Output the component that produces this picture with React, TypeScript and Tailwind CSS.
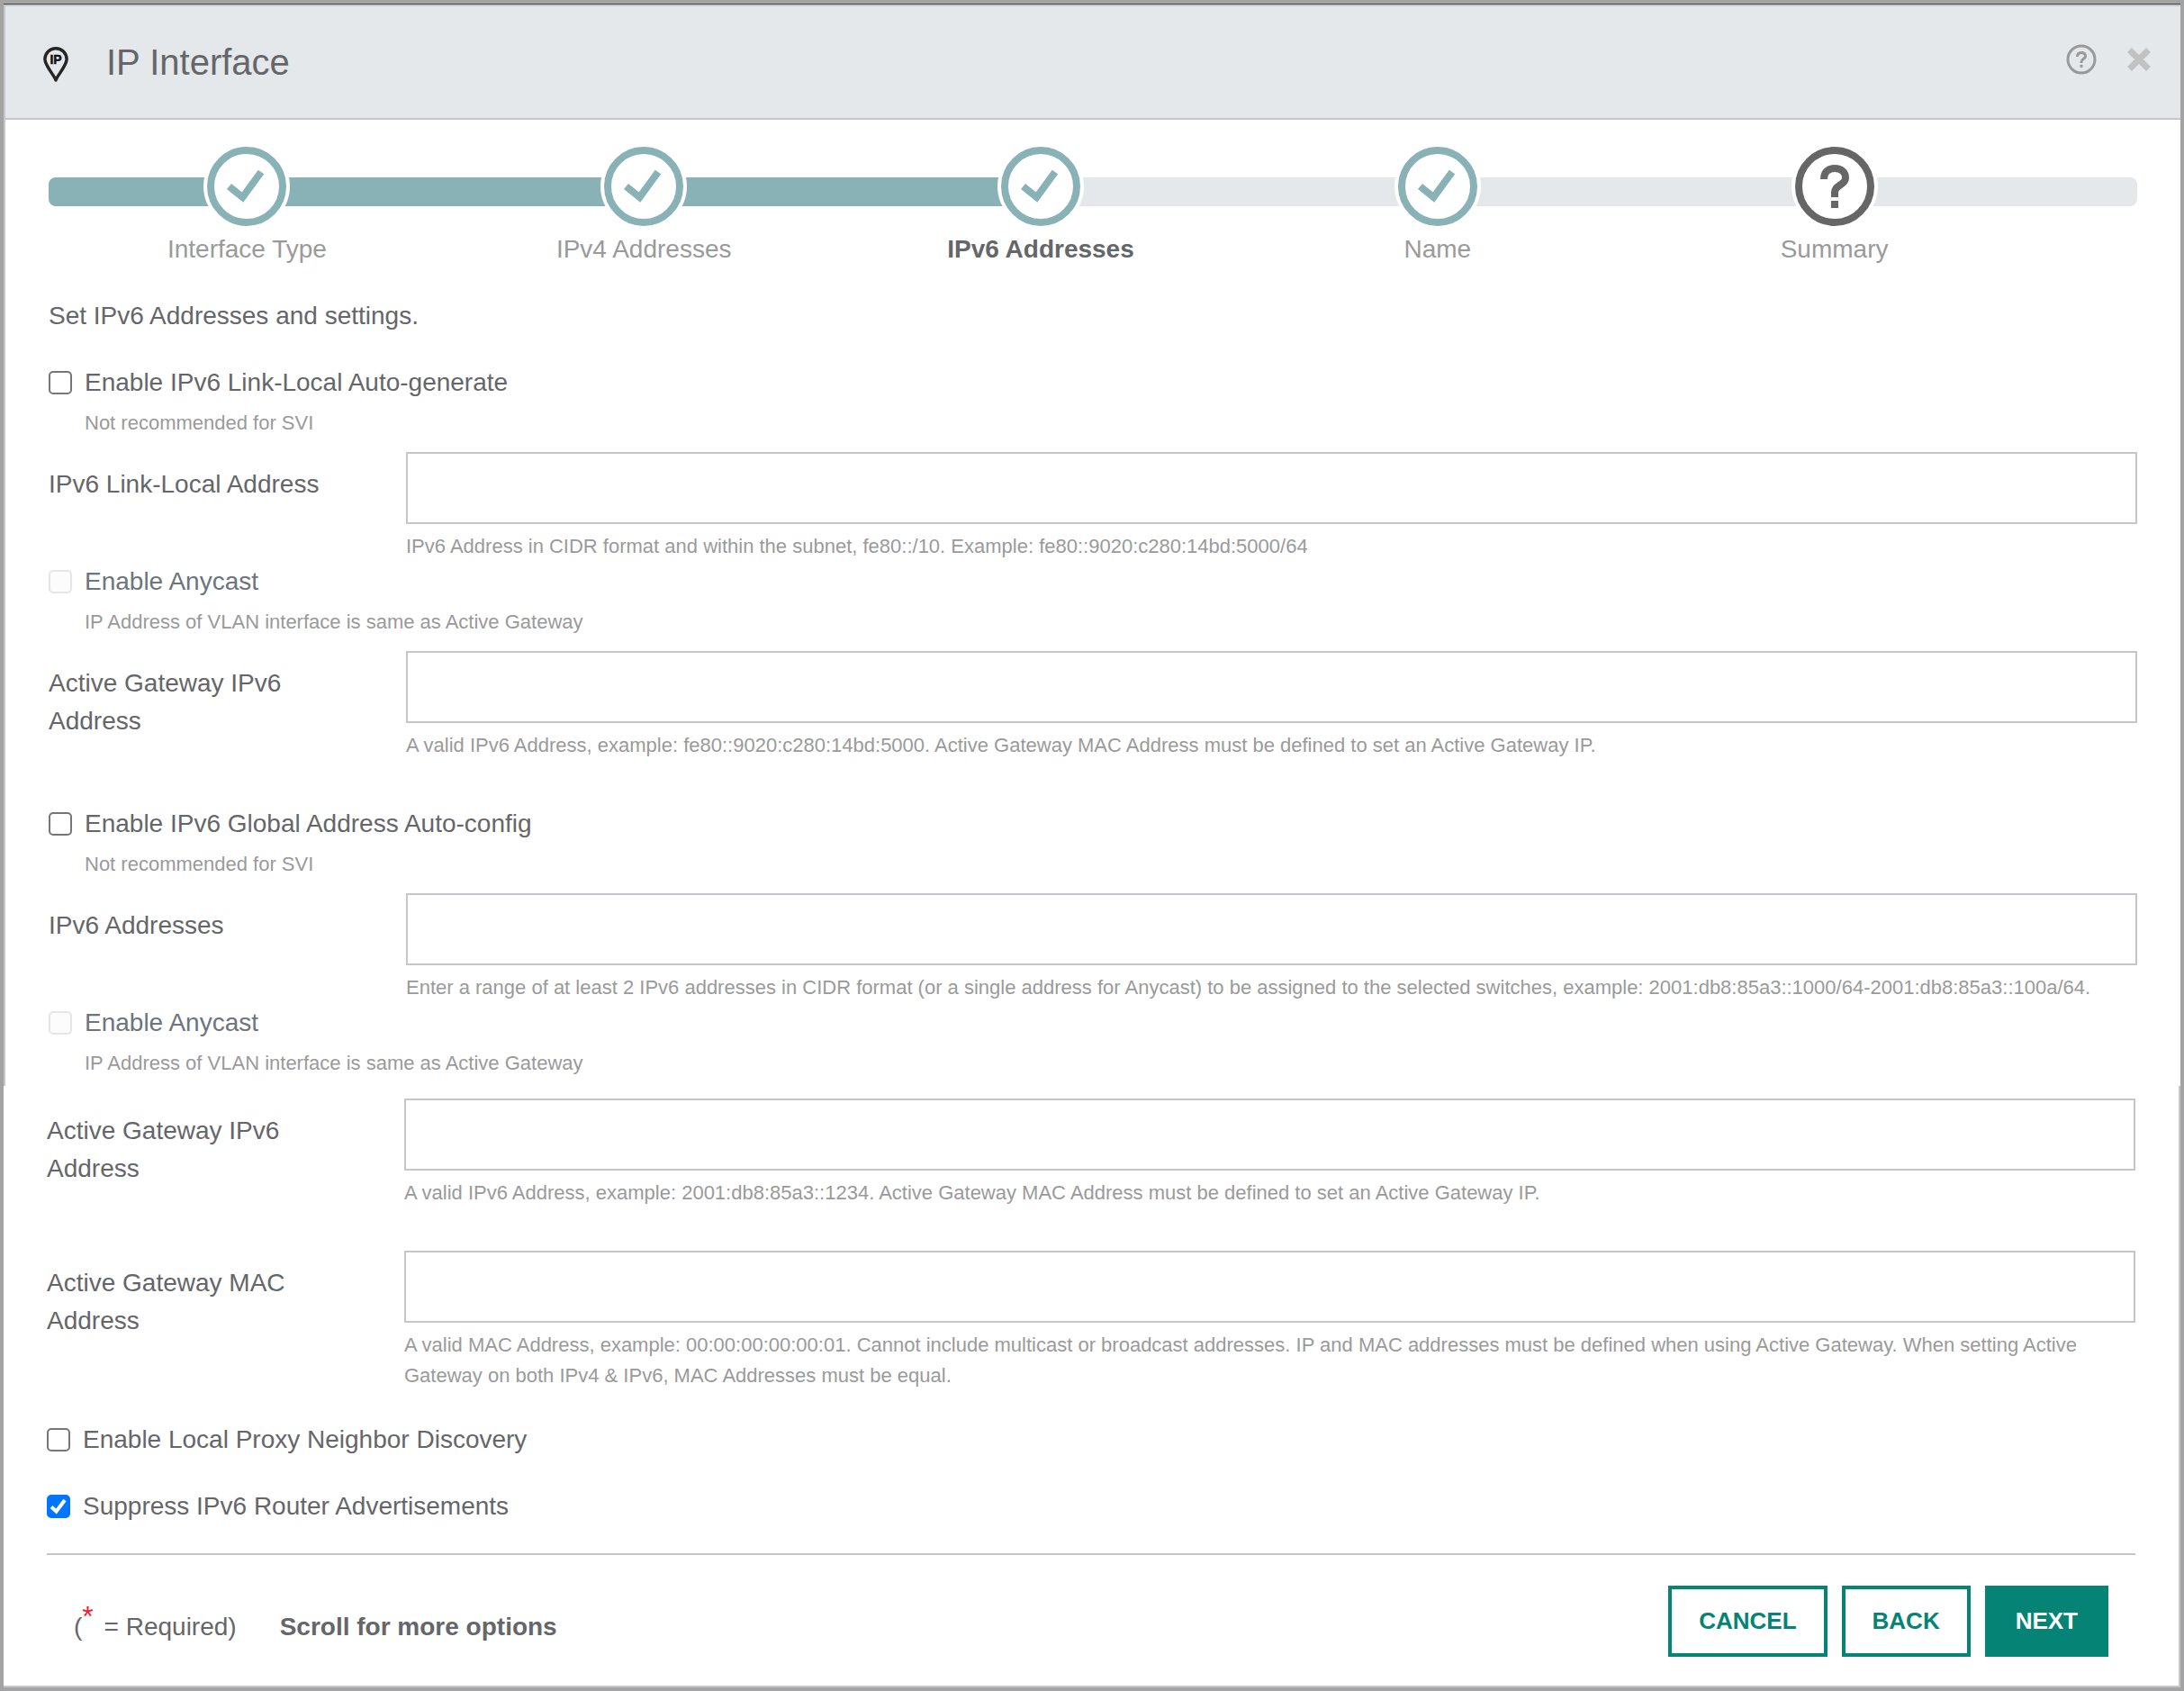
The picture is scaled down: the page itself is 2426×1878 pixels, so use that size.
import type { ReactNode } from "react";

const steps = [
  { label: "Interface Type", done: true },
  { label: "IPv4 Addresses", done: true },
  { label: "IPv6 Addresses", done: true, current: true },
  { label: "Name", done: true },
  { label: "Summary", done: false },
];

function PinIcon() {
  return (
    <svg className="h-12 w-8" viewBox="0 0 32 48" fill="none" aria-hidden="true">
      <path
        d="M16 44C14.500 39 3.900 28 3.900 20.800A12.100 12.100 0 0 1 28.100 20.800C28.100 28 17.500 39 16 44Z"
        stroke="#262626"
        strokeWidth="3.500"
        strokeLinejoin="round"
      />
      <text x="16" y="26" textAnchor="middle" fontSize="14" fontWeight="700" fill="#111111" stroke="#111111" strokeWidth="0.500">
        IP
      </text>
    </svg>
  );
}

function StepIcon({ done }: { done: boolean }) {
  return (
    <svg className="h-24 w-24" viewBox="0 0 96 96" fill="none" aria-hidden="true">
      <circle cx="48" cy="48" r="48" fill="#ffffff" />
      <circle cx="48" cy="48" r="40" stroke={done ? "#88b2b6" : "#666666"} strokeWidth="8" />
      {done ? (
        <path d="M28.500 48L43.500 60L64 32" stroke="#88b2b6" strokeWidth="8" />
      ) : (
        <>
          <path
            d="M36 40C36 32.500 40.500 28 48 28S60 32.500 60 38.500C60 47 48 46 48 54.500V60"
            stroke="#666666"
            strokeWidth="8"
          />
          <path d="M44 64h8v8h-8z" fill="#666666" />
        </>
      )}
    </svg>
  );
}

function Stepper() {
  return (
    <div className="relative">
      <div className="absolute inset-x-0 top-[38px] h-8 overflow-hidden rounded-lg bg-[#e4e8eb]">
        <div className="h-full w-[47.5%] bg-[#88b2b6]" />
      </div>
      <ol className="relative flex">
        {steps.map((step) => (
          <li key={step.label} className="flex w-[19%] flex-col items-center gap-px">
            <StepIcon done={step.done} />
            <span className={step.current ? "font-bold text-[#65666a]" : "text-[#9a9a9a]"}>{step.label}</span>
          </li>
        ))}
      </ol>
    </div>
  );
}

type CheckProps = {
  id: string;
  label: string;
  help?: string;
  disabled?: boolean;
  checked?: boolean;
};

function Check({ id, label, help, disabled, checked }: CheckProps) {
  return (
    <div className="pt-px">
      <div className="flex items-center gap-[14px]">
        <span className="grid">
          <input
            id={id}
            type="checkbox"
            disabled={disabled}
            defaultChecked={checked}
            className="peer col-start-1 row-start-1 size-[26px] appearance-none rounded-[5px] border-2 border-[#767676] bg-white checked:border-[#0075ff] checked:bg-[#0075ff] disabled:border-[#e6e6e6] disabled:bg-[#fcfcfc]"
          />
          <svg
            className="pointer-events-none invisible col-start-1 row-start-1 size-[26px] peer-checked:visible"
            viewBox="0 0 26 26"
            fill="none"
            aria-hidden="true"
          >
            <path d="M5 13.500L10.500 18.500L20 6" stroke="#ffffff" strokeWidth="4" />
          </svg>
        </span>
        <label htmlFor={id} className={disabled ? "text-[#6c757d]" : ""}>
          {label}
        </label>
      </div>
      {help && <p className="mt-[7px] pl-10 text-[22px] leading-[34px] text-[#9a9a9a]">{help}</p>}
    </div>
  );
}

function Field({ id, label, children }: { id: string; label: string; children: ReactNode }) {
  return (
    <div className="flex">
      <label htmlFor={id} className="w-[397px] shrink-0 pt-[15px] pr-20">
        {label}
      </label>
      <div className="min-w-0 flex-1">
        <input
          id={id}
          type="text"
          aria-describedby={`${id}-help`}
          className="block h-20 w-full border-2 border-[#c5c5ca] bg-white px-4 outline-none focus:border-[#058475]"
        />
        <p id={`${id}-help`} className="mt-2 text-[22px] leading-[34px] text-[#9a9a9a]">
          {children}
        </p>
      </div>
    </div>
  );
}

export default function App() {
  return (
    <div className="flex min-h-screen flex-col border-4 border-[#a3a3a3] bg-white font-['Liberation_Sans',Arial,sans-serif] text-[28px] leading-[42px] text-[#65666a]">
      <header className="border-t border-[#444444]">
        <div className="flex items-center border-y-2 border-l-2 border-[#c5c6cb] bg-[#e4e8eb] pr-8 pl-10">
          <PinIcon />
          <h1 className="ml-10 py-[34px] text-[40px] leading-14">IP Interface</h1>
          <div className="ml-auto flex items-center gap-8">
            <button type="button" aria-label="Help" className="mb-1.5">
              <svg className="size-9" viewBox="0 0 36 36" fill="none" aria-hidden="true">
                <circle cx="18" cy="18" r="15" stroke="#9a9a9a" strokeWidth="3" />
                <path
                  d="M13.500 15C13.500 12 15 10.500 18 10.500S22.500 12.300 22.500 14.500C22.500 17.700 18 17.500 18 20.700V22"
                  stroke="#9a9a9a"
                  strokeWidth="3"
                />
                <path d="M16.500 24h3v3h-3z" fill="#9a9a9a" />
              </svg>
            </button>
            <button type="button" aria-label="Close" className="mb-1.5">
              <svg className="size-7" viewBox="0 0 28 28" fill="none" aria-hidden="true">
                <path d="M3.500 3.500L24.500 24.500M24.500 3.500L3.500 24.500" stroke="#c1c1c1" strokeWidth="7" />
              </svg>
            </button>
          </div>
        </div>
      </header>

      <section className="border-l-2 border-[#c5c6cb] px-12 pt-[26px] pb-2">
        <Stepper />
        <p className="mt-8">Set IPv6 Addresses and settings.</p>
        <div className="mt-[31px]">
          <Check id="link-local-auto" label="Enable IPv6 Link-Local Auto-generate" help="Not recommended for SVI" />
        </div>
        <div className="mt-[15px]">
          <Field id="link-local" label="IPv6 Link-Local Address">
            IPv6 Address in CIDR format and within the subnet, fe80::/10. Example: fe80::9020:c280:14bd:5000/64
          </Field>
        </div>
        <Check
          id="link-local-anycast"
          label="Enable Anycast"
          help="IP Address of VLAN interface is same as Active Gateway"
          disabled
        />
        <div className="mt-[15px]">
          <Field id="link-local-gateway" label="Active Gateway IPv6 Address">
            A valid IPv6 Address, example: fe80::9020:c280:14bd:5000. Active Gateway MAC Address must be defined to set
            an Active Gateway IP.
          </Field>
        </div>
        <div className="mt-12">
          <Check id="global-auto" label="Enable IPv6 Global Address Auto-config" help="Not recommended for SVI" />
        </div>
        <div className="mt-[15px]">
          <Field id="addresses" label="IPv6 Addresses">
            Enter a range of at least 2 IPv6 addresses in CIDR format (or a single address for Anycast) to be assigned
            to the selected switches, example: 2001:db8:85a3::1000/64-2001:db8:85a3::100a/64.
          </Field>
        </div>
        <Check
          id="global-anycast"
          label="Enable Anycast"
          help="IP Address of VLAN interface is same as Active Gateway"
          disabled
        />
      </section>

      <section className="flex-1 border-r-2 border-b-2 border-[#c5c6cb] px-12 pt-[14px] pb-8">
        <Field id="global-gateway" label="Active Gateway IPv6 Address">
          A valid IPv6 Address, example: 2001:db8:85a3::1234. Active Gateway MAC Address must be defined to set an
          Active Gateway IP.
        </Field>
        <div className="mt-[47px]">
          <Field id="gateway-mac" label="Active Gateway MAC Address">
            A valid MAC Address, example: 00:00:00:00:00:01. Cannot include multicast or broadcast addresses. IP and
            MAC addresses must be defined when using Active Gateway. When setting Active Gateway on both IPv4 &amp;
            IPv6, MAC Addresses must be equal.
          </Field>
        </div>
        <div className="mt-8 flex flex-col gap-[31px]">
          <Check id="proxy-nd" label="Enable Local Proxy Neighbor Discovery" />
          <Check id="suppress-ra" label="Suppress IPv6 Router Advertisements" checked />
        </div>

        <footer className="mt-[31px] flex items-center border-t-2 border-[#c5c6cb] px-[30px] pt-[34px]">
          <div className="flex items-baseline gap-12 pt-1.5">
            <p>
              (<span className="mr-1 align-super text-[32px] leading-none text-[#f01c34]">*</span> = Required)
            </p>
            <p className="font-bold">Scroll for more options</p>
          </div>
          <div className="ml-auto flex gap-4 text-[26px] font-bold">
            <button type="button" className="h-[79px] border-4 border-[#058475] px-[30px] pb-0.5 text-[#058475]">
              CANCEL
            </button>
            <button type="button" className="h-[79px] border-4 border-[#058475] px-[30px] pb-0.5 text-[#058475]">
              BACK
            </button>
            <button type="button" className="h-[79px] border-4 border-[#058475] bg-[#058475] px-[30px] pb-0.5 text-white">
              NEXT
            </button>
          </div>
        </footer>
      </section>
    </div>
  );
}
